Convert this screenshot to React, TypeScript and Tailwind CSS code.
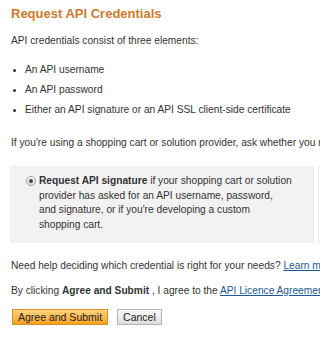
import React from 'react';

export default function App() {
  return (
    <div className="w-[320px] h-[338px] overflow-hidden bg-white font-['Liberation_Sans',Arial,sans-serif] text-[10.2px] text-[#333] pl-[11px] pt-[5px]">
      <h1 className="text-[13px] font-bold text-[#d07a2a] leading-[17px]">Request API Credentials</h1>

      <p className="mt-[12px] leading-[14px]">API credentials consist of three elements:</p>

      <ul className="mt-[15px] flex flex-col gap-[6px]">
        {['An API username', 'An API password', 'Either an API signature or an API SSL client-side certificate'].map((t) => (
          <li key={t} className="flex items-center leading-[14px] whitespace-nowrap">
            <span className="w-[3px] h-[3px] rounded-full bg-[#333] ml-[2px] mr-[9px]" />
            {t}
          </li>
        ))}
      </ul>

      <p className="mt-[19px] leading-[14px] whitespace-nowrap">
        If you're using a shopping cart or solution provider, ask whether you need an API signature or certificate.
      </p>

      <div className="mt-[16px] flex">
        <div className="w-[304px] h-[77px] bg-[#f2f2f2] ml-[-1px] pl-[16px] pt-[8px] flex items-start">
          <span className="mt-[2px] w-[10px] h-[10px] rounded-full border border-[#a0a0a0] bg-gradient-to-b from-[#ffffff] to-[#dcdcdc] flex items-center justify-center shrink-0">
            <span className="w-[4px] h-[4px] rounded-full bg-[#444]" />
          </span>
          <p className="ml-[3px] leading-[14.5px] whitespace-nowrap">
            <b>Request API signature</b> if your shopping cart or solution
            <br />
            provider has asked for an API username, password,
            <br />
            and signature, or if you're developing a custom
            <br />
            shopping cart.
          </p>
        </div>
        <div className="ml-[4px] w-px h-[77px] bg-[#e6e6e6]" />
      </div>

      <p className="mt-[16px] leading-[14px] whitespace-nowrap">
        Need help deciding which credential is right for your needs?{' '}
        <a className="text-[#1a5a9a] underline">Learn more</a>
      </p>

      <p className="mt-[11px] leading-[14px] whitespace-nowrap">
        By clicking <b>Agree and Submit</b> , I agree to the{' '}
        <a className="text-[#1a5a9a] underline">API Licence Agreement and Terms</a>
      </p>

      <div className="mt-[11px] flex gap-[9px] ml-[1px]">
        <button className="h-[16px] px-[5px] text-[10.5px] leading-[14px] text-[#222] border border-[#d8921f] bg-gradient-to-b from-[#ffd27a] to-[#f5a11a]">
          Agree and Submit
        </button>
        <button className="h-[16px] px-[5px] text-[10.5px] leading-[14px] text-[#222] border border-[#b5b5b5] bg-gradient-to-b from-[#fafafa] to-[#dedede]">
          Cancel
        </button>
      </div>
    </div>
  );
}
